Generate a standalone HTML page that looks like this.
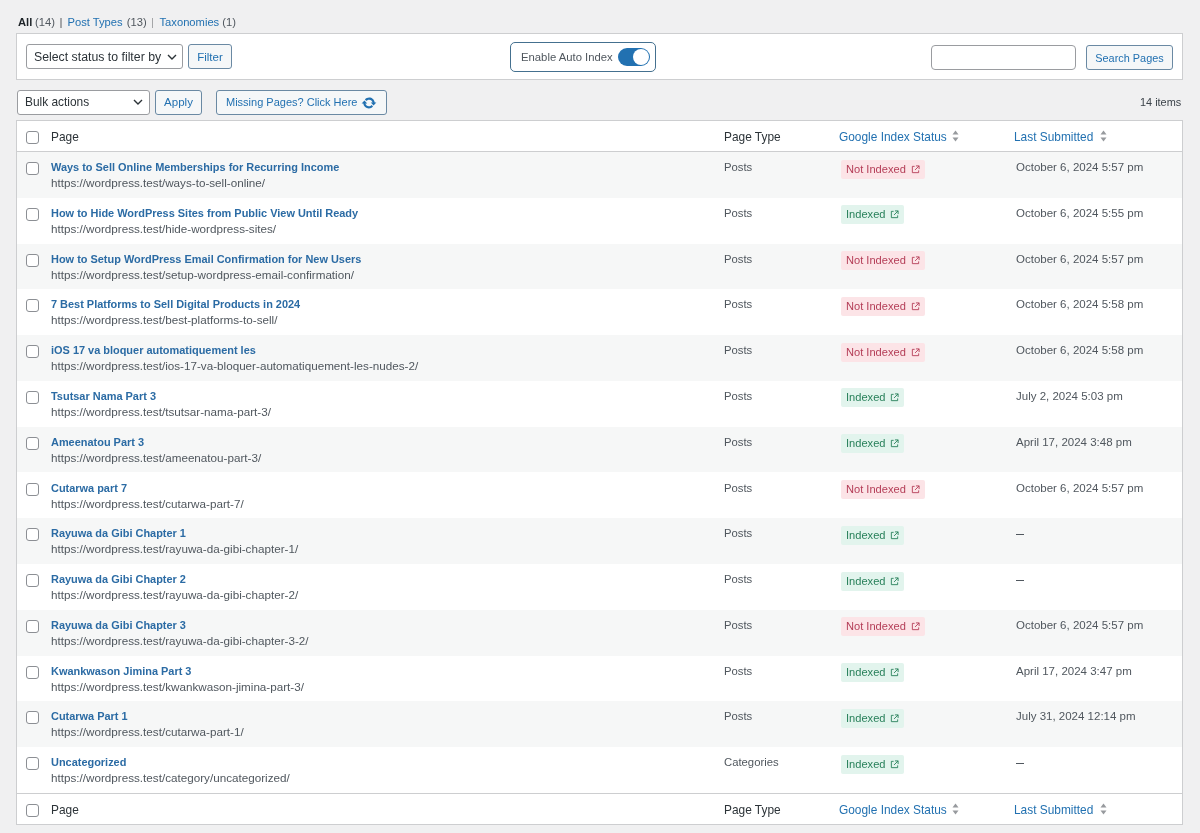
<!DOCTYPE html><html><head><meta charset="utf-8"><style>
*{box-sizing:border-box;margin:0;padding:0}
html,body{width:1200px;height:833px;overflow:hidden;background:#f0f0f1;font-family:"Liberation Sans",sans-serif;color:#3c434a;position:relative}
.a{position:absolute;white-space:nowrap}
.sub{top:15px;font-size:11.2px;line-height:14px;color:#50575e}
.sub b{color:#1d2327;font-weight:bold}
.sub a{color:#2271b1;text-decoration:none}
.sub .sep{color:#a7aaad;margin:0 4px}
.panel{left:16px;top:33px;width:1167px;height:47px;background:#fff;border:1px solid #cdced0}
.sel{background:#fff;border:1px solid #9a9ca0;border-radius:3px;color:#2c3338}
.btn{background:#f5f7f8;border:1px solid #6a89a3;border-radius:3px;color:#2271b1;text-align:center}
.chev{position:absolute}
.tbl{left:16px;top:120px;width:1167px;height:705px;background:#fff;border:1px solid #cdced0}
.hdr{left:0;width:1165px;height:31px;}
.row{left:0;width:1165px;}
.odd{background:#f6f7f7}
.cb{position:absolute;width:13px;height:13px;border:1px solid #8c8f94;border-radius:3px;background:#fff;left:9px}
.th{font-size:11.9px;color:#2c3338}
.th.l{color:#2271b1}
.ttl{font-size:10.95px;font-weight:bold;color:#2b6ba4}
.url{font-size:11.68px;color:#50575e}
.typ{font-size:11.3px;color:#50575e}
.date{font-size:11.5px;color:#50575e}
.badge{height:19px;border-radius:2px;font-size:11.1px;line-height:19px;padding-left:5px}
.bad{background:#fce4e7;color:#b43d57;width:84px}
.good{background:#e2f4ed;color:#28805a;width:63px}
.ext{position:absolute;top:5px}
.sort{position:absolute}
</style></head><body><div class="a" style="left:0;top:0;width:1200px;height:833px;will-change:transform">
<span class="a sub" style="left:18px"><b>All</b></span><span class="a sub" style="left:35px">(14)</span><div class="a" style="left:60.2px;top:18.3px;width:1.5px;height:9.6px;background:#a5a6a8"></div><span class="a sub" style="left:67.5px"><a>Post Types</a></span><span class="a sub" style="left:126.8px">(13)</span><div class="a" style="left:151.8px;top:18.3px;width:1.5px;height:9.6px;background:#a5a6a8"></div><span class="a sub" style="left:159.5px"><a>Taxonomies</a></span><span class="a sub" style="left:222.3px">(1)</span>
<div class="a panel"></div>
<div class="a sel" style="left:26px;top:44px;width:157px;height:25px;"><span class="a" style="left:7px;top:5px;font-size:12.3px;line-height:14px">Select status to filter by</span><svg class="chev" style="left:140px;top:9px" width="10" height="6" viewBox="0 0 10 6"><path d="M1 1l4 4 4-4" fill="none" stroke="#2c3338" stroke-width="1.4"/></svg></div>
<div class="a btn" style="left:188px;top:44px;width:44px;height:25px;font-size:11.5px;line-height:25px">Filter</div>
<div class="a" style="left:510px;top:42px;width:146px;height:30px;border:1px solid #44708f;border-radius:5px;background:#fff"><span class="a" style="left:10px;top:7px;font-size:11.3px;line-height:14px;color:#50575e">Enable Auto Index</span><div class="a" style="left:107px;top:5px;width:32px;height:18px;border-radius:9px;background:#2271b1"><div class="a" style="left:15px;top:1px;width:16px;height:16px;border-radius:8px;background:#fff"></div></div></div>
<div class="a sel" style="left:931px;top:45px;width:145px;height:25px;border-radius:4px"></div>
<div class="a btn" style="left:1086px;top:45px;width:87px;height:25px;font-size:10.9px;line-height:25px">Search Pages</div>
<div class="a sel" style="left:17px;top:90px;width:133px;height:25px;"><span class="a" style="left:7px;top:4px;font-size:11.9px;line-height:14px">Bulk actions</span><svg class="chev" style="left:115px;top:8px" width="10" height="6" viewBox="0 0 10 6"><path d="M1 1l4 4 4-4" fill="none" stroke="#2c3338" stroke-width="1.4"/></svg></div>
<div class="a btn" style="left:155px;top:90px;width:47px;height:25px;font-size:11.5px;line-height:22px">Apply</div>
<div class="a btn" style="left:216px;top:90px;width:171px;height:25px;font-size:11px;line-height:23px;text-align:left;padding-left:9px">Missing Pages? Click Here<svg class="a" style="left:144px;top:3.5px" width="16" height="16" viewBox="0 0 20 20"><path d="M10.2 3.28c3.53 0 6.43 2.61 6.92 6h2.08l-3.5 4-3.5-4h2.32c-.45-1.97-2.21-3.45-4.32-3.45-1.45 0-2.73.71-3.54 1.78L4.95 5.66C6.23 4.2 8.11 3.28 10.2 3.28zm-.4 13.44c-3.52 0-6.43-2.61-6.92-6H.8l3.5-4c1.17 1.33 2.33 2.67 3.5 4H5.48c.45 1.97 2.21 3.45 4.32 3.45 1.45 0 2.73-.71 3.54-1.78l1.71 1.95c-1.28 1.46-3.15 2.38-5.25 2.38z" fill="#2271b1"/></svg></div>
<div class="a" style="left:1140px;top:97px;font-size:10.9px;line-height:10px;color:#3c434a">14 items</div>
<div class="a tbl">
<div class="a hdr" style="top:0px;border-bottom:1px solid #cdced0;"><div class="cb" style="top:10px"></div><span class="a th" style="left:34px;top:9px;line-height:14px">Page</span><span class="a th" style="left:707px;top:9px;line-height:14px">Page Type</span><span class="a th l" style="left:822px;top:9px;line-height:14px">Google Index Status</span><span class="sort" style="left:935px;top:9px"><svg class="sort" width="7" height="12" viewBox="0 0 7 12"><path d="M3.5 0.5L6.5 4.5H0.5Z M3.5 11.5L0.5 7.5H6.5Z" fill="#979a9e"/></svg></span><span class="a th l" style="left:997px;top:9px;line-height:14px">Last Submitted</span><span class="sort" style="left:1083px;top:9px"><svg class="sort" width="7" height="12" viewBox="0 0 7 12"><path d="M3.5 0.5L6.5 4.5H0.5Z M3.5 11.5L0.5 7.5H6.5Z" fill="#979a9e"/></svg></span></div>
<div class="a row odd" style="top:31.000px;height:45.786px"><div class="cb" style="top:10px"></div><span class="a ttl" style="left:34px;top:8px;line-height:14px">Ways to Sell Online Memberships for Recurring Income</span><span class="a url" style="left:34px;top:24px;line-height:14px">https://wordpress.test/ways-to-sell-online/</span><span class="a typ" style="left:707px;top:8px;line-height:14px">Posts</span><span class="a badge bad" style="left:824px;top:7.5px">Not Indexed<span style="position:absolute;left:70px;top:0"><svg class="ext" viewBox="0 0 10 10" width="9" height="9"><path d="M4 1.5H1.5v7h7V6" fill="none" stroke="currentColor" stroke-width="1"/><path d="M5.5 1H9v3.5M9 1L4.5 5.5" fill="none" stroke="currentColor" stroke-width="1"/></svg></span></span><span class="a date" style="left:999px;top:8px;line-height:14px">October 6, 2024 5:57 pm</span></div>
<div class="a row" style="top:76.786px;height:45.786px"><div class="cb" style="top:10px"></div><span class="a ttl" style="left:34px;top:8px;line-height:14px">How to Hide WordPress Sites from Public View Until Ready</span><span class="a url" style="left:34px;top:24px;line-height:14px">https://wordpress.test/hide-wordpress-sites/</span><span class="a typ" style="left:707px;top:8px;line-height:14px">Posts</span><span class="a badge good" style="left:824px;top:7.5px">Indexed<span style="position:absolute;left:49px;top:0"><svg class="ext" viewBox="0 0 10 10" width="9" height="9"><path d="M4 1.5H1.5v7h7V6" fill="none" stroke="currentColor" stroke-width="1"/><path d="M5.5 1H9v3.5M9 1L4.5 5.5" fill="none" stroke="currentColor" stroke-width="1"/></svg></span></span><span class="a date" style="left:999px;top:8px;line-height:14px">October 6, 2024 5:55 pm</span></div>
<div class="a row odd" style="top:122.571px;height:45.786px"><div class="cb" style="top:10px"></div><span class="a ttl" style="left:34px;top:8px;line-height:14px">How to Setup WordPress Email Confirmation for New Users</span><span class="a url" style="left:34px;top:24px;line-height:14px">https://wordpress.test/setup-wordpress-email-confirmation/</span><span class="a typ" style="left:707px;top:8px;line-height:14px">Posts</span><span class="a badge bad" style="left:824px;top:7.5px">Not Indexed<span style="position:absolute;left:70px;top:0"><svg class="ext" viewBox="0 0 10 10" width="9" height="9"><path d="M4 1.5H1.5v7h7V6" fill="none" stroke="currentColor" stroke-width="1"/><path d="M5.5 1H9v3.5M9 1L4.5 5.5" fill="none" stroke="currentColor" stroke-width="1"/></svg></span></span><span class="a date" style="left:999px;top:8px;line-height:14px">October 6, 2024 5:57 pm</span></div>
<div class="a row" style="top:168.357px;height:45.786px"><div class="cb" style="top:10px"></div><span class="a ttl" style="left:34px;top:8px;line-height:14px">7 Best Platforms to Sell Digital Products in 2024</span><span class="a url" style="left:34px;top:24px;line-height:14px">https://wordpress.test/best-platforms-to-sell/</span><span class="a typ" style="left:707px;top:8px;line-height:14px">Posts</span><span class="a badge bad" style="left:824px;top:7.5px">Not Indexed<span style="position:absolute;left:70px;top:0"><svg class="ext" viewBox="0 0 10 10" width="9" height="9"><path d="M4 1.5H1.5v7h7V6" fill="none" stroke="currentColor" stroke-width="1"/><path d="M5.5 1H9v3.5M9 1L4.5 5.5" fill="none" stroke="currentColor" stroke-width="1"/></svg></span></span><span class="a date" style="left:999px;top:8px;line-height:14px">October 6, 2024 5:58 pm</span></div>
<div class="a row odd" style="top:214.143px;height:45.786px"><div class="cb" style="top:10px"></div><span class="a ttl" style="left:34px;top:8px;line-height:14px">iOS 17 va bloquer automatiquement les</span><span class="a url" style="left:34px;top:24px;line-height:14px">https://wordpress.test/ios-17-va-bloquer-automatiquement-les-nudes-2/</span><span class="a typ" style="left:707px;top:8px;line-height:14px">Posts</span><span class="a badge bad" style="left:824px;top:7.5px">Not Indexed<span style="position:absolute;left:70px;top:0"><svg class="ext" viewBox="0 0 10 10" width="9" height="9"><path d="M4 1.5H1.5v7h7V6" fill="none" stroke="currentColor" stroke-width="1"/><path d="M5.5 1H9v3.5M9 1L4.5 5.5" fill="none" stroke="currentColor" stroke-width="1"/></svg></span></span><span class="a date" style="left:999px;top:8px;line-height:14px">October 6, 2024 5:58 pm</span></div>
<div class="a row" style="top:259.929px;height:45.786px"><div class="cb" style="top:10px"></div><span class="a ttl" style="left:34px;top:8px;line-height:14px">Tsutsar Nama Part 3</span><span class="a url" style="left:34px;top:24px;line-height:14px">https://wordpress.test/tsutsar-nama-part-3/</span><span class="a typ" style="left:707px;top:8px;line-height:14px">Posts</span><span class="a badge good" style="left:824px;top:7.5px">Indexed<span style="position:absolute;left:49px;top:0"><svg class="ext" viewBox="0 0 10 10" width="9" height="9"><path d="M4 1.5H1.5v7h7V6" fill="none" stroke="currentColor" stroke-width="1"/><path d="M5.5 1H9v3.5M9 1L4.5 5.5" fill="none" stroke="currentColor" stroke-width="1"/></svg></span></span><span class="a date" style="left:999px;top:8px;line-height:14px">July 2, 2024 5:03 pm</span></div>
<div class="a row odd" style="top:305.714px;height:45.786px"><div class="cb" style="top:10px"></div><span class="a ttl" style="left:34px;top:8px;line-height:14px">Ameenatou Part 3</span><span class="a url" style="left:34px;top:24px;line-height:14px">https://wordpress.test/ameenatou-part-3/</span><span class="a typ" style="left:707px;top:8px;line-height:14px">Posts</span><span class="a badge good" style="left:824px;top:7.5px">Indexed<span style="position:absolute;left:49px;top:0"><svg class="ext" viewBox="0 0 10 10" width="9" height="9"><path d="M4 1.5H1.5v7h7V6" fill="none" stroke="currentColor" stroke-width="1"/><path d="M5.5 1H9v3.5M9 1L4.5 5.5" fill="none" stroke="currentColor" stroke-width="1"/></svg></span></span><span class="a date" style="left:999px;top:8px;line-height:14px">April 17, 2024 3:48 pm</span></div>
<div class="a row" style="top:351.500px;height:45.786px"><div class="cb" style="top:10px"></div><span class="a ttl" style="left:34px;top:8px;line-height:14px">Cutarwa part 7</span><span class="a url" style="left:34px;top:24px;line-height:14px">https://wordpress.test/cutarwa-part-7/</span><span class="a typ" style="left:707px;top:8px;line-height:14px">Posts</span><span class="a badge bad" style="left:824px;top:7.5px">Not Indexed<span style="position:absolute;left:70px;top:0"><svg class="ext" viewBox="0 0 10 10" width="9" height="9"><path d="M4 1.5H1.5v7h7V6" fill="none" stroke="currentColor" stroke-width="1"/><path d="M5.5 1H9v3.5M9 1L4.5 5.5" fill="none" stroke="currentColor" stroke-width="1"/></svg></span></span><span class="a date" style="left:999px;top:8px;line-height:14px">October 6, 2024 5:57 pm</span></div>
<div class="a row odd" style="top:397.286px;height:45.786px"><div class="cb" style="top:10px"></div><span class="a ttl" style="left:34px;top:8px;line-height:14px">Rayuwa da Gibi Chapter 1</span><span class="a url" style="left:34px;top:24px;line-height:14px">https://wordpress.test/rayuwa-da-gibi-chapter-1/</span><span class="a typ" style="left:707px;top:8px;line-height:14px">Posts</span><span class="a badge good" style="left:824px;top:7.5px">Indexed<span style="position:absolute;left:49px;top:0"><svg class="ext" viewBox="0 0 10 10" width="9" height="9"><path d="M4 1.5H1.5v7h7V6" fill="none" stroke="currentColor" stroke-width="1"/><path d="M5.5 1H9v3.5M9 1L4.5 5.5" fill="none" stroke="currentColor" stroke-width="1"/></svg></span></span><div class="a" style="left:998.7px;top:15.5px;width:8.3px;height:1.3px;background:#50575e"></div></div>
<div class="a row" style="top:443.071px;height:45.786px"><div class="cb" style="top:10px"></div><span class="a ttl" style="left:34px;top:8px;line-height:14px">Rayuwa da Gibi Chapter 2</span><span class="a url" style="left:34px;top:24px;line-height:14px">https://wordpress.test/rayuwa-da-gibi-chapter-2/</span><span class="a typ" style="left:707px;top:8px;line-height:14px">Posts</span><span class="a badge good" style="left:824px;top:7.5px">Indexed<span style="position:absolute;left:49px;top:0"><svg class="ext" viewBox="0 0 10 10" width="9" height="9"><path d="M4 1.5H1.5v7h7V6" fill="none" stroke="currentColor" stroke-width="1"/><path d="M5.5 1H9v3.5M9 1L4.5 5.5" fill="none" stroke="currentColor" stroke-width="1"/></svg></span></span><div class="a" style="left:998.7px;top:15.5px;width:8.3px;height:1.3px;background:#50575e"></div></div>
<div class="a row odd" style="top:488.857px;height:45.786px"><div class="cb" style="top:10px"></div><span class="a ttl" style="left:34px;top:8px;line-height:14px">Rayuwa da Gibi Chapter 3</span><span class="a url" style="left:34px;top:24px;line-height:14px">https://wordpress.test/rayuwa-da-gibi-chapter-3-2/</span><span class="a typ" style="left:707px;top:8px;line-height:14px">Posts</span><span class="a badge bad" style="left:824px;top:7.5px">Not Indexed<span style="position:absolute;left:70px;top:0"><svg class="ext" viewBox="0 0 10 10" width="9" height="9"><path d="M4 1.5H1.5v7h7V6" fill="none" stroke="currentColor" stroke-width="1"/><path d="M5.5 1H9v3.5M9 1L4.5 5.5" fill="none" stroke="currentColor" stroke-width="1"/></svg></span></span><span class="a date" style="left:999px;top:8px;line-height:14px">October 6, 2024 5:57 pm</span></div>
<div class="a row" style="top:534.643px;height:45.786px"><div class="cb" style="top:10px"></div><span class="a ttl" style="left:34px;top:8px;line-height:14px">Kwankwason Jimina Part 3</span><span class="a url" style="left:34px;top:24px;line-height:14px">https://wordpress.test/kwankwason-jimina-part-3/</span><span class="a typ" style="left:707px;top:8px;line-height:14px">Posts</span><span class="a badge good" style="left:824px;top:7.5px">Indexed<span style="position:absolute;left:49px;top:0"><svg class="ext" viewBox="0 0 10 10" width="9" height="9"><path d="M4 1.5H1.5v7h7V6" fill="none" stroke="currentColor" stroke-width="1"/><path d="M5.5 1H9v3.5M9 1L4.5 5.5" fill="none" stroke="currentColor" stroke-width="1"/></svg></span></span><span class="a date" style="left:999px;top:8px;line-height:14px">April 17, 2024 3:47 pm</span></div>
<div class="a row odd" style="top:580.429px;height:45.786px"><div class="cb" style="top:10px"></div><span class="a ttl" style="left:34px;top:8px;line-height:14px">Cutarwa Part 1</span><span class="a url" style="left:34px;top:24px;line-height:14px">https://wordpress.test/cutarwa-part-1/</span><span class="a typ" style="left:707px;top:8px;line-height:14px">Posts</span><span class="a badge good" style="left:824px;top:7.5px">Indexed<span style="position:absolute;left:49px;top:0"><svg class="ext" viewBox="0 0 10 10" width="9" height="9"><path d="M4 1.5H1.5v7h7V6" fill="none" stroke="currentColor" stroke-width="1"/><path d="M5.5 1H9v3.5M9 1L4.5 5.5" fill="none" stroke="currentColor" stroke-width="1"/></svg></span></span><span class="a date" style="left:999px;top:8px;line-height:14px">July 31, 2024 12:14 pm</span></div>
<div class="a row" style="top:626.214px;height:45.786px"><div class="cb" style="top:10px"></div><span class="a ttl" style="left:34px;top:8px;line-height:14px">Uncategorized</span><span class="a url" style="left:34px;top:24px;line-height:14px">https://wordpress.test/category/uncategorized/</span><span class="a typ" style="left:707px;top:8px;line-height:14px">Categories</span><span class="a badge good" style="left:824px;top:7.5px">Indexed<span style="position:absolute;left:49px;top:0"><svg class="ext" viewBox="0 0 10 10" width="9" height="9"><path d="M4 1.5H1.5v7h7V6" fill="none" stroke="currentColor" stroke-width="1"/><path d="M5.5 1H9v3.5M9 1L4.5 5.5" fill="none" stroke="currentColor" stroke-width="1"/></svg></span></span><div class="a" style="left:998.7px;top:15.5px;width:8.3px;height:1.3px;background:#50575e"></div></div>
<div class="a hdr" style="top:672px;border-top:1px solid #cdced0;"><div class="cb" style="top:10px"></div><span class="a th" style="left:34px;top:9px;line-height:14px">Page</span><span class="a th" style="left:707px;top:9px;line-height:14px">Page Type</span><span class="a th l" style="left:822px;top:9px;line-height:14px">Google Index Status</span><span class="sort" style="left:935px;top:9px"><svg class="sort" width="7" height="12" viewBox="0 0 7 12"><path d="M3.5 0.5L6.5 4.5H0.5Z M3.5 11.5L0.5 7.5H6.5Z" fill="#979a9e"/></svg></span><span class="a th l" style="left:997px;top:9px;line-height:14px">Last Submitted</span><span class="sort" style="left:1083px;top:9px"><svg class="sort" width="7" height="12" viewBox="0 0 7 12"><path d="M3.5 0.5L6.5 4.5H0.5Z M3.5 11.5L0.5 7.5H6.5Z" fill="#979a9e"/></svg></span></div>
</div>
</div></body></html>
